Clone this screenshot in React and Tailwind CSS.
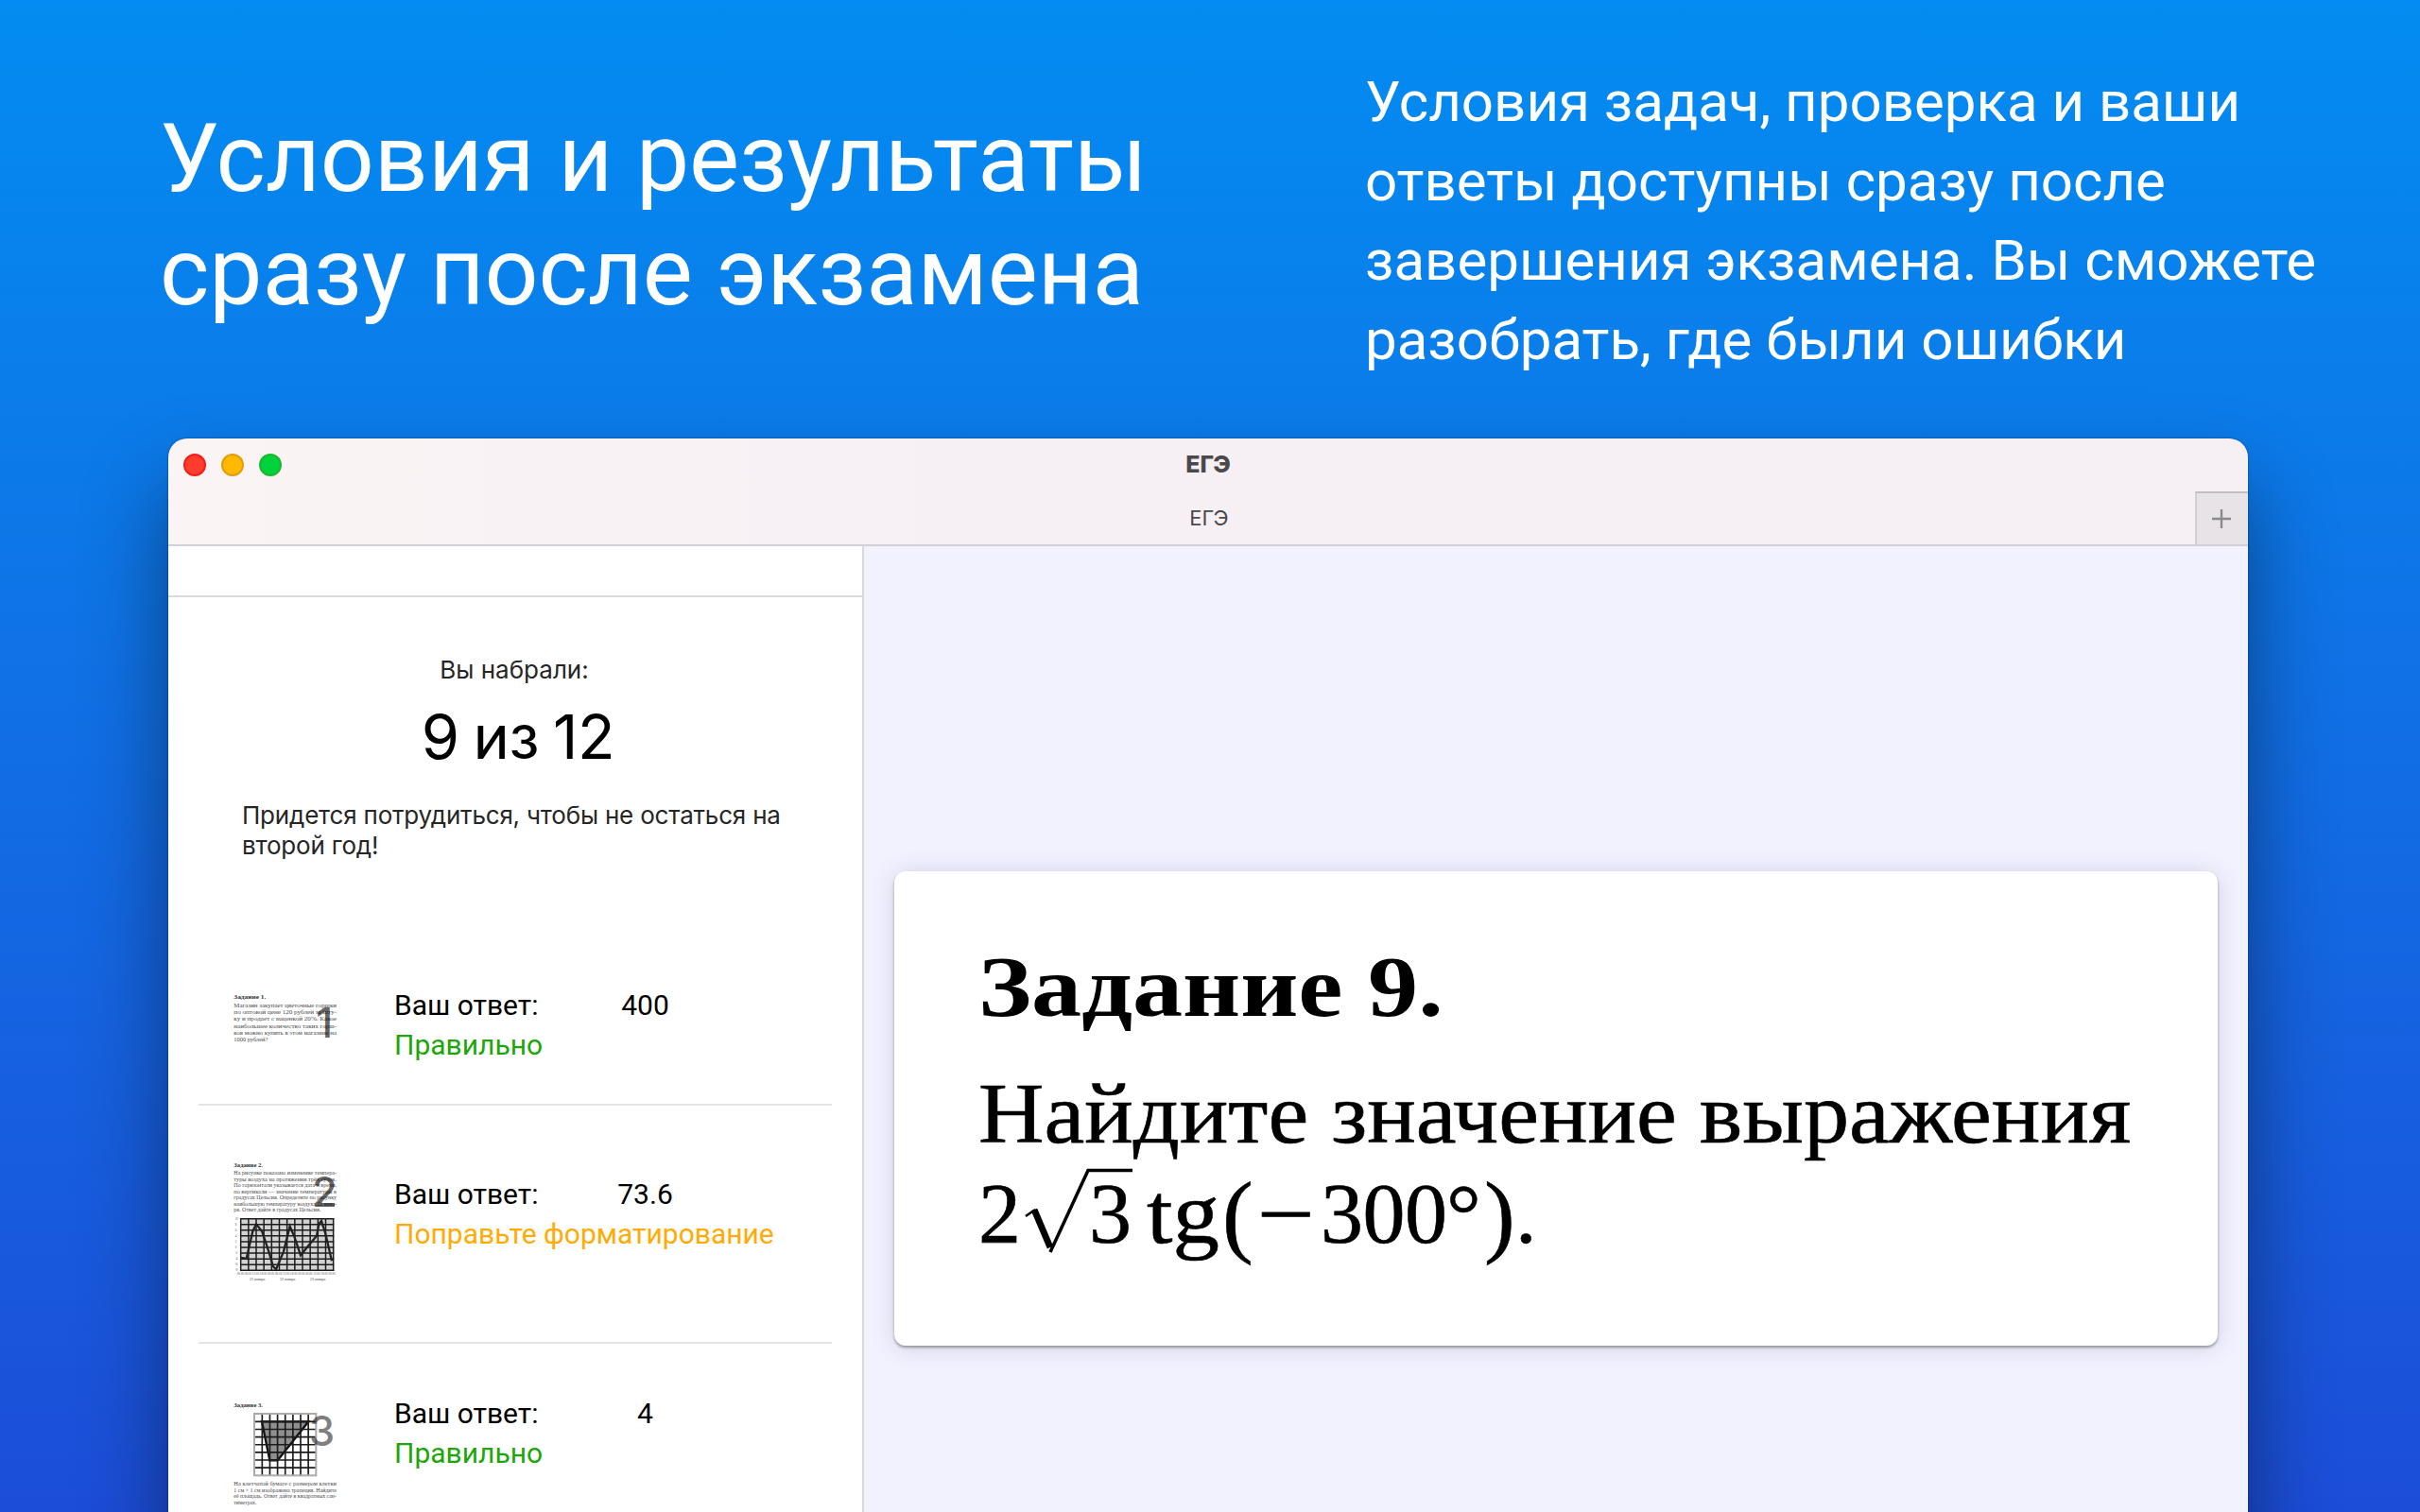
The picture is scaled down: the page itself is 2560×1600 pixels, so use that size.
import React from "react";

const LINES_1 = [
  "Магазин закупает цветочные горшки",
  "по оптовой цене 120 рублей за шту-",
  "ку и продает с наценкой 20%. Какое",
  "наибольшее количество таких горш-",
  "ков можно купить в этом магазине на",
];
const LINES_2 = [
  "На рисунке показано изменение темпера-",
  "туры воздуха на протяжении трёх суток.",
  "По горизонтали указывается дата и время,",
  "по вертикали — значение температуры в",
  "градусах Цельсия. Определите по рисунку",
  "наибольшую температуру воздуха 22 янва-",
];
const LINES_3 = [
  "На клетчатой бумаге с размером клетки",
  "1 см × 1 см изображена трапеция. Найдите",
  "её площадь. Ответ дайте в квадратных сан-",
];

const range = (n) => Array.from({ length: n }, (_, i) => i);

function Paragraph({ lines, last, y, step, size, lastWidth }) {
  return (
    <g fontSize={size} fill="#4a4a4a">
      {lines.map((line, i) => (
        <text key={line} x="4" y={y + i * step} textLength="326" lengthAdjust="spacingAndGlyphs">
          {line}
        </text>
      ))}
      <text x="4" y={y + lines.length * step} textLength={lastWidth} lengthAdjust="spacingAndGlyphs">
        {last}
      </text>
    </g>
  );
}

function ThumbTitle({ n, y, size }) {
  return (
    <text x="4" y={y} fontSize={size} fontWeight="700" fill="#333" textLength={n === 1 ? 102 : 92} lengthAdjust="spacingAndGlyphs">
      Задание {n}.
    </text>
  );
}

function ThumbDigit({ n, x, y, opacity }) {
  return (
    <text x={x} y={y} fontSize="130" fontWeight="500" fill="#000" fillOpacity={opacity} className="font-['Inter',sans-serif]">
      {n}
    </text>
  );
}

const thumbClass = "block w-28 shrink-0 overflow-visible font-['Liberation_Serif',serif]";

function ThumbOne() {
  return (
    <svg viewBox="0 0 336 168" className={thumbClass}>
      <ThumbTitle n={1} y={20} size={20} />
      <Paragraph lines={LINES_1} last="1000 рублей?" y={47} step={22} size={19} lastWidth={108} />
      <ThumbDigit n="1" x={265} y={144} opacity={0.6} />
    </svg>
  );
}

function ThumbTwo() {
  return (
    <svg viewBox="0 0 336 384" className={thumbClass}>
      <ThumbTitle n={2} y={17} size={18} />
      <Paragraph lines={LINES_2} last="ря. Ответ дайте в градусах Цельсия." y={43} step={19.3} size={17} lastWidth={276} />
      <rect x="26" y="182" width="294" height="164" fill="#d2d2d2" />
      <g stroke="#1c1c1c" strokeWidth="4.5">
        {range(13).map((i) => (
          <path key={i} d={`M${26 + i * 24.5} 180V348`} />
        ))}
        {range(10).map((i) => (
          <path key={i} d={`M24 ${182 + i * 18.2}H322`} />
        ))}
      </g>
      <polyline
        points="26,306 44,309 64,222 75,199 94,223 118,296 128,332 138,343 162,286 182,206 197,241 216,298 242,266 267,236 274,199 282,189 294,226 315,316"
        fill="none"
        stroke="#222"
        strokeWidth="7"
      />
      <g fontSize="10" fill="#555">
        {range(10).map((i) => (
          <text key={i} x="8" y={185 + i * 18.2}>{10 - i * 2}</text>
        ))}
        <text x="14" y="361" textLength="312" lengthAdjust="spacingAndGlyphs">
          00:00 06:00 12:00 18:00 00:00 06:00 12:00 18:00 00:00 06:00 12:00 18:00 00:00
        </text>
      </g>
      <g fontSize="12" fill="#444">
        <text x="54" y="378">21 января</text>
        <text x="150" y="378">22 января</text>
        <text x="246" y="378">23 января</text>
      </g>
      <ThumbDigit n="2" x={252} y={144} opacity={0.6} />
    </svg>
  );
}

function ThumbThree() {
  return (
    <svg viewBox="0 0 336 336" className={thumbClass}>
      <ThumbTitle n={3} y={18} size={18} />
      <rect x="69" y="39" width="196" height="196" fill="#fff" />
      <path d="M93 64H241L143 187H118Z" fill="#8f8f8f" stroke="#111" strokeWidth="7" />
      <g stroke="#1c1c1c" strokeWidth="5">
        {range(7).map((i) => (
          <path key={i} d={`M${94 + i * 24.4} 39V235M69 ${64 + i * 24.4}H265`} />
        ))}
      </g>
      <rect x="69" y="39" width="196" height="196" fill="none" stroke="#aaa" strokeWidth="6" />
      <Paragraph lines={LINES_3} last="тиметрах." y={267} step={20} size={17} lastWidth={72} />
      <ThumbDigit n="3" x={243} y={141} opacity={0.52} />
    </svg>
  );
}

function Answer({ value, status, tone }) {
  return (
    <div className="ml-[59px] w-[420px] text-[30px] leading-[42px] text-black">
      <div className="flex">
        <span className="w-[157px]">Ваш ответ:</span>
        <span className="w-[217px] text-center">{value}</span>
      </div>
      <div className={tone === "ok" ? "text-[#20a50b]" : "text-[#ffab05]"}>{status}</div>
    </div>
  );
}

function Sidebar() {
  return (
    <aside className="flex w-[736px] shrink-0 flex-col border-r-2 border-[#d9d8dc] bg-white">
      <div className="h-[54px] shrink-0 border-b-2 border-[#dadadb]" />
      <div className="flex h-[370px] shrink-0 flex-col pt-[61px] font-['Inter',sans-serif] text-[#262626]">
        <p className="pr-0.5 text-center text-[26px] leading-8">Вы набрали:</p>
        <p className="mt-4 pl-1.5 text-center text-[65px] leading-[78px] tracking-[-0.4px] text-black [word-spacing:-3px]">9 из 12</p>
        <p className="mt-7 ml-[78px] text-[26px] leading-8 tracking-[-0.2px]">
          Придется потрудиться, чтобы не остаться на
          <br />
          второй год!
        </p>
      </div>
      <div className="mx-8 flex flex-col">
        <div className="flex h-[168px] items-start border-b-2 border-[#e4e4e4] pl-9">
          <div className="pt-[48px]"><ThumbOne /></div>
          <div className="pt-[41px]"><Answer value="400" status="Правильно" tone="ok" /></div>
        </div>
        <div className="flex h-[252px] items-start border-b-2 border-[#e4e4e4] pl-9">
          <div className="pt-[59px]"><ThumbTwo /></div>
          <div className="pt-[73px]"><Answer value="73.6" status="Поправьте форматирование" tone="warn" /></div>
        </div>
        <div className="flex items-start pl-9">
          <div className="pt-[61px]"><ThumbThree /></div>
          <div className="pt-[53px]"><Answer value="4" status="Правильно" tone="ok" /></div>
        </div>
      </div>
    </aside>
  );
}

function Formula() {
  return (
    <div className="mt-1.5 flex h-[100px] items-start whitespace-nowrap [-webkit-text-stroke:0.6px_black]">
      <span className="w-[49px]">2</span>
      <span className="grid w-[115px]">
        <svg viewBox="0 0 115 100" className="col-start-1 row-start-1 h-[100px] w-[115px] overflow-visible" fill="none" stroke="#000">
          <path d="M1 52L11 45" strokeWidth="2.5" />
          <path d="M10 45L27 85" strokeWidth="7" />
          <path d="M27 90L67 3.5H114" strokeWidth="3.5" />
        </svg>
        <span className="col-start-1 row-start-1 mr-0.5 justify-self-end">3</span>
      </span>
      <span className="ml-3.5 inline-block w-[80px] origin-left scale-x-110">tg</span>
      <span className="inline-block w-[37px] text-[98px]">(</span>
      <span className="inline-block w-[67px] origin-left scale-x-120">−</span>
      <span className="w-[133px] tracking-[-0.5px]">300</span>
      <span className="inline-block w-[40px] text-[92px]">°</span>
      <span className="inline-block w-[33px] text-[98px]">)</span>
      <span>.</span>
    </div>
  );
}

function TaskCard() {
  return (
    <article className="h-[502px] w-[1400px] rounded-xl bg-white pt-[73px] pl-[89px] font-['Liberation_Serif',serif] text-[90px] leading-[100px] text-black shadow-[0_2px_3px_rgba(0,0,0,0.35),0_2px_26px_rgba(50,30,80,0.16)]">
      <h2 className="origin-left scale-x-118 font-bold whitespace-nowrap">Задание 9.</h2>
      <p className="mt-[34px] w-max origin-left scale-x-107 whitespace-nowrap [-webkit-text-stroke:0.6px_black]">Найдите значение выражения</p>
      <Formula />
    </article>
  );
}

function TitleBar() {
  return (
    <header className="grid h-[114px] shrink-0 grid-cols-[1fr_auto_1fr] border-b-2 border-[#d2d0d6] bg-linear-to-r from-[#fbf4f4] to-[#f6f0f5] to-40%">
      <div className="flex gap-4 pt-4 pl-4">
        <span className="size-6 rounded-full border-2 border-[#f51d18] bg-[#ff3d2f]" />
        <span className="size-6 rounded-full border-2 border-[#e09d0c] bg-[#ffb900]" />
        <span className="size-6 rounded-full border-2 border-[#1bb82c] bg-[#00d23b]" />
      </div>
      <div className="flex flex-col items-center font-['Inter',sans-serif] text-[#4a484a]">
        <span className="mt-[11px] text-[25px] leading-8 font-extrabold">ЕГЭ</span>
        <span className="mt-[25px] pl-0.5 text-[22px] leading-8">ЕГЭ</span>
      </div>
      <div className="flex items-end justify-end">
        <div className="flex size-14 items-center justify-center border-t-2 border-l-2 border-t-[#c3bfc1] border-l-[#d4ced2] bg-[#e8e3e6]">
          <svg viewBox="0 0 20 20" className="mr-0.5 size-5" stroke="#8b8a8b" strokeWidth="2.4">
            <path d="M10 0V20M0 10H20" />
          </svg>
        </div>
      </div>
    </header>
  );
}

export default function App() {
  return (
    <div className="flex h-[1600px] w-[2560px] flex-col overflow-hidden bg-linear-to-b from-[#038cf1] to-[#1c4dd8] font-['Roboto',sans-serif]">
      <div className="flex h-[464px] shrink-0 text-white">
        <h1 className="mt-[108px] ml-[169px] w-[1275px] text-[100px] leading-[120px]">
          Условия и результаты
          <br />
          сразу после экзамена
        </h1>
        <p className="mt-[66px] text-6xl leading-[84px] whitespace-nowrap">
          Условия задач, проверка и ваши
          <br />
          ответы доступны сразу после
          <br />
          завершения экзамена. Вы сможете
          <br />
          разобрать, где были ошибки
        </p>
      </div>
      <main className="ml-[178px] flex h-[1300px] w-[2200px] shrink-0 flex-col rounded-[20px] shadow-[0_0_2px_rgba(0,0,0,0.5),0_50px_90px_rgba(0,0,0,0.45)]">
        <div className="flex grow flex-col overflow-hidden rounded-[20px]">
          <TitleBar />
          <div className="flex grow">
            <Sidebar />
            <section className="grow bg-[#f2f2ff] pt-[344px] pl-8">
              <TaskCard />
            </section>
          </div>
        </div>
      </main>
    </div>
  );
}
